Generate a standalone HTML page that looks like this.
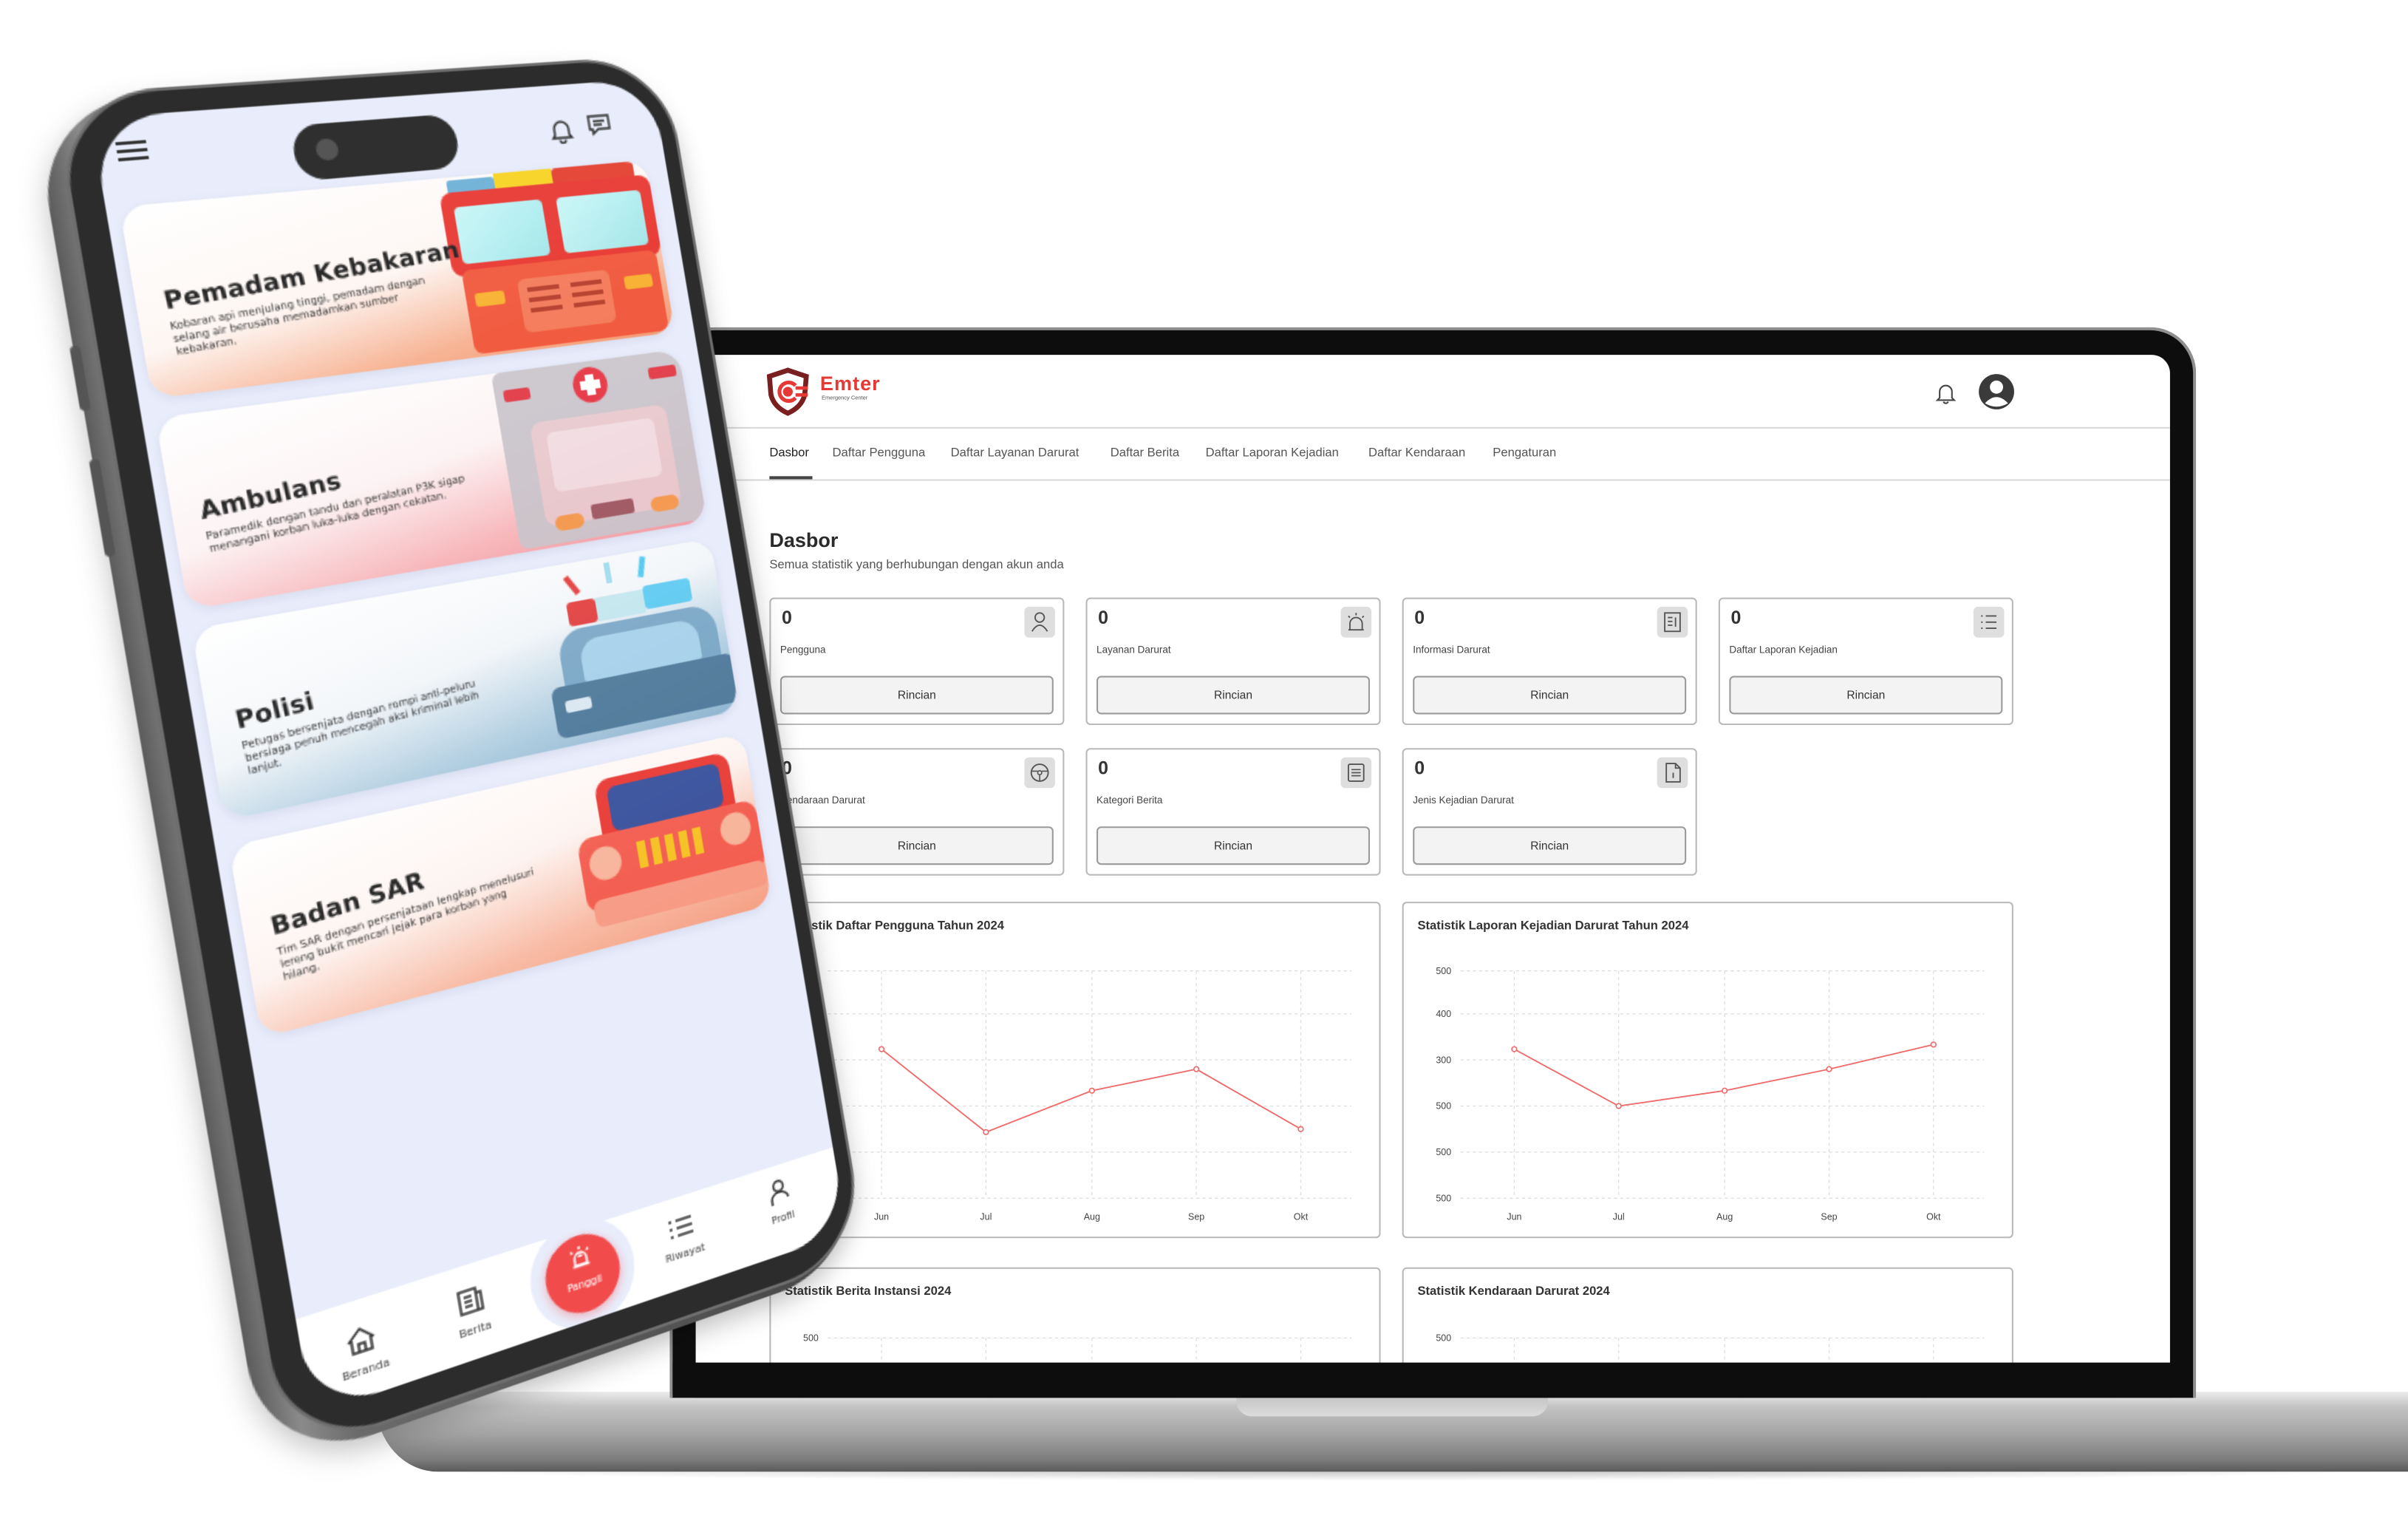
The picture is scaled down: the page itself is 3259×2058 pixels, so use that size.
<!DOCTYPE html>
<html><head><meta charset="utf-8">
<style>
html,body{margin:0;padding:0;width:3259px;height:2056px;overflow:hidden;background:#fff}
#s{position:absolute;left:0;top:0;width:1568px;height:990px;transform:scale(2.0785);transform-origin:0 0;font-family:"Liberation Sans",sans-serif;color:#333}
.a{position:absolute}
.card{position:absolute;width:190px;height:81px;border:1px solid #b9b9b9;border-radius:3px;background:#fff}
.card .n{position:absolute;left:7px;top:5px;font-size:12px;font-weight:bold;color:#333}
.card .ib{position:absolute;right:5px;top:5px;width:20px;height:20px;background:#dedede;border-radius:3px}
.card .lb{position:absolute;left:6px;top:30px;font-size:6.5px;color:#444}
.card .bt{position:absolute;left:6px;right:6px;top:50px;height:23px;background:#f3f3f3;border:1px solid #9a9a9a;border-radius:3px;font-size:7.5px;text-align:center;line-height:23px;color:#333}
.chart{position:absolute;width:396px;border:1px solid #b9b9b9;border-radius:3px;background:#fff}
.nav span{position:absolute;top:59px;font-size:8px;color:#555;white-space:nowrap}
.pc{position:absolute;left:8px;width:344px;height:120px;border-radius:16px;overflow:hidden;box-shadow:0 2px 6px rgba(80,90,140,.12)}
.pt{position:absolute;left:16px;transform:rotate(-4deg);transform-origin:0 0;font-family:"DejaVu Sans",sans-serif;color:#2a2a2a;width:200px}
.pt b{display:block;font-size:15.5px;font-weight:bold;white-space:nowrap;letter-spacing:.2px}
.pt i{display:block;font-style:normal;font-size:6.6px;line-height:8px;margin-top:3px;width:170px;color:#333}
.ni{position:absolute;font-family:"DejaVu Sans",sans-serif;font-size:7px;color:#444;text-align:center;width:50px}
</style></head><body>
<div id="s">

<!-- LAPTOP BASE -->
<div class="a" style="left:250px;top:950px;width:1318px;height:14px;background:radial-gradient(ellipse at center,rgba(0,0,0,.25),rgba(0,0,0,0) 70%)"></div>
<div class="a" style="left:245px;top:906px;width:1330px;height:52px;background:linear-gradient(#ececec 0%,#c4c4c4 18%,#a2a2a2 55%,#7c7c7c 85%,#5a5a5a 100%);border-radius:6px 0 0 40px / 6px 0 0 44px"></div>
<div class="a" style="left:805px;top:906px;width:203px;height:16px;background:linear-gradient(#bfbfbf,#dcdcdc);border-radius:0 0 10px 10px"></div>

<!-- LAPTOP LID -->
<div class="a" style="left:436px;top:213px;width:990px;height:695px;background:#0d0d0d;border:2px solid #8f8f8f;border-bottom:none;border-radius:30px 30px 0 0"></div>
<div class="a" style="left:453px;top:231px;width:960px;height:657px;background:#fff;border-radius:12px 12px 0 0;overflow:hidden">
  <svg class="a" style="left:45px;top:8px" width="30" height="32" viewBox="0 0 30 32">
    <path d="M15 2 L27 6 L26 18 Q24 26 15 30 Q6 26 4 18 L3 6 Z" fill="none" stroke="#7a1f1f" stroke-width="3.2"/>
    <path d="M20 12 A6 6 0 1 0 20 20" fill="none" stroke="#e53935" stroke-width="2.5"/>
    <circle cx="15" cy="16" r="3.2" fill="#e53935"/>
    <rect x="20" y="12.5" width="8" height="2.2" fill="#e53935"/><rect x="20" y="17" width="8" height="2.2" fill="#e53935"/>
  </svg>
  <div class="a" style="left:81px;top:11px;font-size:13px;font-weight:bold;color:#e53935;letter-spacing:.5px">Emter</div>
  <div class="a" style="left:82px;top:26px;font-size:3.6px;color:#555">Emergency Center</div>
  <svg class="a" style="left:807px;top:17px" width="14" height="16" viewBox="0 0 14 16"><path d="M3 11 V7 a4 4 0 0 1 8 0 V11 L12.5 12.5 H1.5 Z M5.5 13.5 a1.6 1.6 0 0 0 3 0" fill="none" stroke="#444" stroke-width="1"/></svg>
  <svg class="a" style="left:835px;top:12px" width="24" height="24" viewBox="0 0 24 24"><circle cx="12" cy="12" r="11.5" fill="#3a3a3a"/><circle cx="12" cy="9" r="4.3" fill="#fff"/><path d="M4.5 19.5 Q12 11.5 19.5 19.5 Q12 24 4.5 19.5Z" fill="#fff"/></svg>
  <div class="a" style="left:0;top:47px;width:960px;height:1px;background:#d8d8d8"></div>
  <div class="nav">
    <span style="left:48px;color:#222">Dasbor</span>
    <span style="left:89px">Daftar Pengguna</span>
    <span style="left:166px">Daftar Layanan Darurat</span>
    <span style="left:270px">Daftar Berita</span>
    <span style="left:332px">Daftar Laporan Kejadian</span>
    <span style="left:438px">Daftar Kendaraan</span>
    <span style="left:519px">Pengaturan</span>
  </div>
  <div class="a" style="left:48px;top:79px;width:28px;height:1.5px;background:#444"></div>
  <div class="a" style="left:0;top:81px;width:960px;height:1px;background:#d8d8d8"></div>
  <div class="a" style="left:48px;top:113px;font-size:13px;font-weight:bold;color:#2a2a2a">Dasbor</div>
  <div class="a" style="left:48px;top:132px;font-size:8px;color:#555">Semua statistik yang berhubungan dengan akun anda</div>

  <div class="card" style="left:48px;top:158px"><div class="n">0</div><div class="ib"><svg width="20" height="20" viewBox="0 0 20 20"><circle cx="10" cy="7" r="3" fill="none" stroke="#555" stroke-width=".9"/><path d="M5 16 Q10 8 15 16" fill="none" stroke="#555" stroke-width=".9"/></svg></div><div class="lb">Pengguna</div><div class="bt">Rincian</div></div>
  <div class="card" style="left:254px;top:158px"><div class="n">0</div><div class="ib"><svg width="20" height="20" viewBox="0 0 20 20"><path d="M6 15 V11 a4 4 0 0 1 8 0 V15 Z M5 15 H15 M10 4 V5.5 M5 6 l1 1 M15 6 l-1 1" fill="none" stroke="#555" stroke-width=".9"/></svg></div><div class="lb">Layanan Darurat</div><div class="bt">Rincian</div></div>
  <div class="card" style="left:460px;top:158px"><div class="n">0</div><div class="ib"><svg width="20" height="20" viewBox="0 0 20 20"><rect x="5" y="4" width="10" height="12" fill="none" stroke="#555" stroke-width=".9"/><path d="M7 7 H10 M7 9.5 H10 M7 12 H10 M12 7 V13" stroke="#555" stroke-width=".9"/></svg></div><div class="lb">Informasi Darurat</div><div class="bt">Rincian</div></div>
  <div class="card" style="left:666px;top:158px"><div class="n">0</div><div class="ib"><svg width="20" height="20" viewBox="0 0 20 20"><path d="M8 6 H15 M8 10 H15 M8 14 H15 M5 6 H6 M5 10 H6 M5 14 H6" stroke="#555" stroke-width=".9"/></svg></div><div class="lb">Daftar Laporan Kejadian</div><div class="bt">Rincian</div></div>
  <div class="card" style="left:48px;top:256px"><div class="n">0</div><div class="ib"><svg width="20" height="20" viewBox="0 0 20 20"><circle cx="10" cy="10" r="5.5" fill="none" stroke="#555" stroke-width=".9"/><circle cx="10" cy="10" r="1.3" fill="none" stroke="#555" stroke-width=".8"/><path d="M4.6 9 H8.7 M11.3 9 H15.4 M10 11.3 V15.5" stroke="#555" stroke-width=".8"/></svg></div><div class="lb">Kendaraan Darurat</div><div class="bt">Rincian</div></div>
  <div class="card" style="left:254px;top:256px"><div class="n">0</div><div class="ib"><svg width="20" height="20" viewBox="0 0 20 20"><rect x="5" y="4.5" width="10" height="11" rx="1" fill="none" stroke="#555" stroke-width=".9"/><path d="M7 8 H13 M7 10 H13 M7 12 H13" stroke="#555" stroke-width=".8"/></svg></div><div class="lb">Kategori Berita</div><div class="bt">Rincian</div></div>
  <div class="card" style="left:460px;top:256px"><div class="n">0</div><div class="ib"><svg width="20" height="20" viewBox="0 0 20 20"><path d="M6 4 H12 L15 7 V16 H6 Z M12 4 V7 H15 M10.5 10 V13.5" fill="none" stroke="#555" stroke-width=".9"/></svg></div><div class="lb">Jenis Kejadian Darurat</div><div class="bt">Rincian</div></div>

  <div class="chart" style="left:48px;top:356px;height:217px">
    <svg width="396" height="217" viewBox="0 0 396 217" style="font-family:'Liberation Sans',sans-serif">
      <text x="9" y="17" font-size="8" font-weight="bold" fill="#333">Statistik Daftar Pengguna Tahun 2024</text>
      <g stroke="#dcdcdc" stroke-width=".6" stroke-dasharray="2 2">
        <path d="M37 44 H378 M37 72 H378 M37 102 H378 M37 132 H378 M37 162 H378 M37 192 H378 M72 44 V192 M140 44 V192 M209 44 V192 M277 44 V192 M345 44 V192"/></g>
      <g font-size="6" fill="#444" text-anchor="end"><text x="31" y="46">500</text><text x="31" y="74">400</text><text x="31" y="104">300</text><text x="31" y="134">500</text><text x="31" y="164">500</text><text x="31" y="194">500</text></g>
      <g font-size="6" fill="#444" text-anchor="middle"><text x="72" y="206">Jun</text><text x="140" y="206">Jul</text><text x="209" y="206">Aug</text><text x="277" y="206">Sep</text><text x="345" y="206">Okt</text></g>
      <polyline points="72,95 140,149 209,122 277,108 345,147" fill="none" stroke="#f16a6a" stroke-width=".9"/>
      <g fill="#fff" stroke="#f16a6a" stroke-width=".8"><circle cx="72" cy="95" r="1.6"/><circle cx="140" cy="149" r="1.6"/><circle cx="209" cy="122" r="1.6"/><circle cx="277" cy="108" r="1.6"/><circle cx="345" cy="147" r="1.6"/></g>
    </svg>
  </div>
  <div class="chart" style="left:460px;top:356px;height:217px">
    <svg width="396" height="217" viewBox="0 0 396 217" style="font-family:'Liberation Sans',sans-serif">
      <text x="9" y="17" font-size="8" font-weight="bold" fill="#333">Statistik Laporan Kejadian Darurat Tahun 2024</text>
      <g stroke="#dcdcdc" stroke-width=".6" stroke-dasharray="2 2">
        <path d="M37 44 H378 M37 72 H378 M37 102 H378 M37 132 H378 M37 162 H378 M37 192 H378 M72 44 V192 M140 44 V192 M209 44 V192 M277 44 V192 M345 44 V192"/></g>
      <g font-size="6" fill="#444" text-anchor="end"><text x="31" y="46">500</text><text x="31" y="74">400</text><text x="31" y="104">300</text><text x="31" y="134">500</text><text x="31" y="164">500</text><text x="31" y="194">500</text></g>
      <g font-size="6" fill="#444" text-anchor="middle"><text x="72" y="206">Jun</text><text x="140" y="206">Jul</text><text x="209" y="206">Aug</text><text x="277" y="206">Sep</text><text x="345" y="206">Okt</text></g>
      <polyline points="72,95 140,132 209,122 277,108 345,92" fill="none" stroke="#f16a6a" stroke-width=".9"/>
      <g fill="#fff" stroke="#f16a6a" stroke-width=".8"><circle cx="72" cy="95" r="1.6"/><circle cx="140" cy="132" r="1.6"/><circle cx="209" cy="122" r="1.6"/><circle cx="277" cy="108" r="1.6"/><circle cx="345" cy="92" r="1.6"/></g>
    </svg>
  </div>
  <div class="chart" style="left:48px;top:594px;height:120px">
    <svg width="396" height="120" style="font-family:'Liberation Sans',sans-serif">
      <text x="9" y="17" font-size="8" font-weight="bold" fill="#333">Statistik Berita Instansi 2024</text>
      <g stroke="#dcdcdc" stroke-width=".6" stroke-dasharray="2 2"><path d="M37 45 H378 M72 45 V120 M140 45 V120 M209 45 V120 M277 45 V120 M345 45 V120"/></g>
      <text x="31" y="47" font-size="6" fill="#444" text-anchor="end">500</text>
    </svg>
  </div>
  <div class="chart" style="left:460px;top:594px;height:120px">
    <svg width="396" height="120" style="font-family:'Liberation Sans',sans-serif">
      <text x="9" y="17" font-size="8" font-weight="bold" fill="#333">Statistik Kendaraan Darurat 2024</text>
      <g stroke="#dcdcdc" stroke-width=".6" stroke-dasharray="2 2"><path d="M37 45 H378 M72 45 V120 M140 45 V120 M209 45 V120 M277 45 V120 M345 45 V120"/></g>
      <text x="31" y="47" font-size="6" fill="#444" text-anchor="end">500</text>
    </svg>
  </div>
</div>
<div class="a" style="left:438px;top:887px;width:987px;height:21px;background:#0d0d0d"></div>

<!-- PHONE -->
<div class="a" style="left:0;top:0;width:360px;height:780px;transform-origin:0 0;transform:matrix3d(1.1415,-0.05333,0,0.00033944,0.17895,1.045,0,0.0000036218,0,0,1,0,66,106,0,1)">
  <div class="a" style="left:-34px;top:-40px;width:408px;height:846px;border-radius:66px;background:linear-gradient(90deg,#5c5c5c,#8a8a8a 6%,#6a6a6a 14%,#444 100%);box-shadow:0 6px 18px rgba(0,0,0,.25)"></div>
  <div class="a" style="left:-36px;top:180px;width:6px;height:60px;background:#555;border-radius:3px"></div>
  <div class="a" style="left:-36px;top:110px;width:6px;height:40px;background:#555;border-radius:3px"></div>
  <div class="a" style="left:-22px;top:-44px;width:398px;height:846px;border-radius:62px;background:#2c2c2c;border:2px solid #6e6e6e;box-sizing:border-box"></div>
  <div class="a" style="left:-2px;top:-28px;width:366px;height:810px;border-radius:44px;background:#e9edfb;overflow:hidden">
    <div class="a" style="left:0;top:28px;width:366px;height:780px">
      <div class="a" style="left:12px;top:-12px;width:18px;height:2px;background:#333;box-shadow:0 5px 0 #333,0 10px 0 #333"></div>
      <div class="a" style="left:118px;top:-14px;width:106px;height:36px;border-radius:18px;background:#2f2f2f"></div>
      <div class="a" style="left:132px;top:-4px;width:14px;height:14px;border-radius:50%;background:#555"></div>
      <svg class="a" style="left:288px;top:-6px" width="16" height="18" viewBox="0 0 16 18"><path d="M3 12 V8 a5 5 0 0 1 10 0 V12 L14.5 14 H1.5 Z M6 15.5 a2 2 0 0 0 4 0" fill="none" stroke="#333" stroke-width="1.4"/></svg>
      <svg class="a" style="left:314px;top:-8px" width="18" height="18" viewBox="0 0 18 18"><path d="M2 3 H16 V12 H8 L4 15 V12 H2 Z M5 6.5 H13 M5 9 H11" fill="none" stroke="#333" stroke-width="1.4"/></svg>

      <div class="pc" style="top:28px;background:linear-gradient(168deg,#fff 0%,#fdf6f3 48%,#f7b596 78%,#f39a74 100%)">
        <div class="a" style="left:196px;top:-2px;width:150px;height:124px;opacity:.92">
          <div class="a" style="left:40px;top:0;width:40px;height:14px;background:#f7d21c;border-radius:3px"></div>
          <div class="a" style="left:8px;top:4px;width:32px;height:10px;background:#6aaed6;border-radius:2px"></div>
          <div class="a" style="left:80px;top:2px;width:58px;height:12px;background:#e33a2a;border-radius:3px"></div>
          <div class="a" style="left:2px;top:12px;width:146px;height:56px;background:#e8322d;border-radius:8px"></div>
          <div class="a" style="left:10px;top:22px;width:60px;height:38px;background:linear-gradient(135deg,#c9f6f7,#9ee8ec);border-radius:4px"></div>
          <div class="a" style="left:80px;top:22px;width:60px;height:38px;background:linear-gradient(135deg,#c9f6f7,#9ee8ec);border-radius:4px"></div>
          <div class="a" style="left:8px;top:64px;width:136px;height:56px;background:#f0553a;border-radius:6px"></div>
          <div class="a" style="left:14px;top:80px;width:20px;height:9px;background:#f8b22d;border-radius:2px"></div>
          <div class="a" style="left:118px;top:80px;width:20px;height:9px;background:#f8b22d;border-radius:2px"></div>
          <div class="a" style="left:44px;top:74px;width:64px;height:36px;background:#f37a5b;border-radius:5px"></div>
          <div class="a" style="left:50px;top:80px;width:22px;height:3px;background:#b23a2a;box-shadow:0 7px 0 #b23a2a,0 14px 0 #b23a2a,30px 0 0 #b23a2a,30px 7px 0 #b23a2a,30px 14px 0 #b23a2a"></div>
        </div>
        <div class="pt" style="top:52px"><b>Pemadam Kebakaran</b><i>Kobaran api menjulang tinggi, pemadam dengan selang air berusaha memadamkan sumber kebakaran.</i></div>
      </div>

      <div class="pc" style="top:160px;background:linear-gradient(168deg,#fff 0%,#fcf3f4 45%,#f7b7bb 78%,#f39aa2 100%)">
        <div class="a" style="left:212px;top:0;width:134px;height:120px;opacity:.92">
          <div class="a" style="left:0;top:0;width:132px;height:118px;background:#c9c5cb;border-radius:6px"></div>
          <div class="a" style="left:6px;top:12px;width:18px;height:8px;background:#e0333f;border-radius:2px"></div>
          <div class="a" style="left:108px;top:10px;width:20px;height:8px;background:#e0333f;border-radius:2px"></div>
          <div class="a" style="left:54px;top:4px;width:24px;height:24px;border-radius:50%;background:#e52f3d"></div>
          <div class="a" style="left:63px;top:9px;width:6px;height:14px;background:#fff"></div>
          <div class="a" style="left:59px;top:13px;width:14px;height:6px;background:#fff"></div>
          <div class="a" style="left:20px;top:36px;width:96px;height:70px;background:#e8c9cf;border-radius:8px"></div>
          <div class="a" style="left:30px;top:44px;width:76px;height:40px;background:#f1dde2;border-radius:5px"></div>
          <div class="a" style="left:52px;top:96px;width:30px;height:10px;background:#9b5560;border-radius:2px"></div>
          <div class="a" style="left:26px;top:100px;width:20px;height:10px;background:#f39a4a;border-radius:6px"></div>
          <div class="a" style="left:94px;top:98px;width:20px;height:10px;background:#f39a4a;border-radius:6px"></div>
        </div>
        <div class="pt" style="top:52px"><b>Ambulans</b><i>Paramedik dengan tandu dan peralatan P3K sigap menangani korban luka-luka dengan cekatan.</i></div>
      </div>

      <div class="pc" style="top:292px;background:linear-gradient(168deg,#fff 0%,#f3f6f9 45%,#b4d0e2 75%,#8fb5cf 100%)">
        <div class="a" style="left:210px;top:0;width:136px;height:120px;opacity:.92">
          <div class="a" style="left:30px;top:8px;width:4px;height:14px;background:#e23b3b;transform:rotate(-30deg)"></div>
          <div class="a" style="left:56px;top:4px;width:4px;height:14px;background:#9fdcec"></div>
          <div class="a" style="left:80px;top:4px;width:4px;height:14px;background:#4ec8ef;transform:rotate(15deg)"></div>
          <div class="a" style="left:26px;top:26px;width:20px;height:16px;background:#e23b3b;border-radius:3px"></div>
          <div class="a" style="left:46px;top:26px;width:34px;height:16px;background:#c4e6ee"></div>
          <div class="a" style="left:80px;top:24px;width:34px;height:16px;background:#5ccaf1;border-radius:3px"></div>
          <div class="a" style="left:16px;top:44px;width:112px;height:44px;background:#7aa6c6;border-radius:18px 18px 4px 4px"></div>
          <div class="a" style="left:30px;top:52px;width:84px;height:28px;background:#a9d2ec;border-radius:14px 14px 2px 2px"></div>
          <div class="a" style="left:6px;top:80px;width:130px;height:34px;background:#4f7898;border-radius:6px"></div>
          <div class="a" style="left:14px;top:90px;width:18px;height:8px;background:#dfeaf2;border-radius:2px"></div>
        </div>
        <div class="pt" style="top:52px"><b>Polisi</b><i>Petugas bersenjata dengan rompi anti-peluru bersiaga penuh mencegah aksi kriminal lebih lanjut.</i></div>
      </div>

      <div class="pc" style="top:428px;background:linear-gradient(168deg,#fff 0%,#fdf4f1 45%,#f8bca6 76%,#f59e82 100%)">
        <div class="a" style="left:212px;top:6px;width:134px;height:114px;opacity:.92">
          <div class="a" style="left:22px;top:4px;width:96px;height:40px;background:#e8322d;border-radius:10px 10px 0 0"></div>
          <div class="a" style="left:30px;top:10px;width:80px;height:30px;background:#2f4a9a;border-radius:6px"></div>
          <div class="a" style="left:4px;top:40px;width:128px;height:50px;background:#f2574a;border-radius:10px"></div>
          <div class="a" style="left:10px;top:48px;width:22px;height:22px;border-radius:50%;background:#f7b49a"></div>
          <div class="a" style="left:104px;top:46px;width:22px;height:22px;border-radius:50%;background:#f7b49a"></div>
          <div class="a" style="left:44px;top:50px;width:6px;height:18px;background:#f5c21b;box-shadow:10px 0 0 #f5c21b,20px 0 0 #f5c21b,30px 0 0 #f5c21b,40px 0 0 #f5c21b"></div>
          <div class="a" style="left:8px;top:82px;width:124px;height:18px;background:#f79a84;border-radius:6px"></div>
        </div>
        <div class="pt" style="top:46px"><b>Badan SAR</b><i>Tim SAR dengan persenjataan lengkap menelusuri lereng bukit mencari jejak para korban yang hilang.</i></div>
      </div>

      <div class="a" style="left:0;top:722px;width:366px;height:70px;background:#fff"></div>
      <div class="a" style="left:145px;top:716px;width:70px;height:70px;border-radius:50%;background:#e9edfb"></div>
      <div class="a" style="left:155px;top:726px;width:50px;height:50px;border-radius:50%;background:#f14b4b;box-shadow:0 2px 6px rgba(240,75,75,.4)"></div>
      <svg class="a" style="left:170px;top:730px" width="20" height="20" viewBox="0 0 20 20"><path d="M6 15 V11 a4 4 0 0 1 8 0 V15 Z M4.5 15.5 H15.5 M10 3 V5 M4 5.5 l1.3 1.3 M16 5.5 l-1.3 1.3 M9 10 a1 1 0 0 1 2 0" fill="none" stroke="#fff" stroke-width="1.4"/></svg>
      <div class="ni" style="left:155px;top:754px;color:#fff;font-size:6.5px">Panggil</div>
      <svg class="a" style="left:26px;top:738px" width="20" height="18" viewBox="0 0 20 18"><path d="M2 9 L10 2 L18 9 M4 8 V16 H16 V8 M8 16 V11 H12 V16" fill="none" stroke="#333" stroke-width="1.5"/></svg>
      <div class="ni" style="left:11px;top:762px">Beranda</div>
      <svg class="a" style="left:96px;top:736px" width="20" height="18" viewBox="0 0 20 18"><path d="M3 2 H14 V16 H3 Z M14 5 H17 V16 H14 M6 6 H11 M6 9 H11 M6 12 H11" fill="none" stroke="#333" stroke-width="1.5"/></svg>
      <div class="ni" style="left:81px;top:760px">Berita</div>
      <svg class="a" style="left:240px;top:734px" width="20" height="16" viewBox="0 0 20 16"><path d="M7 3 H18 M7 8 H18 M7 13 H18 M2 3 H4 M2 8 H4 M2 13 H4" stroke="#333" stroke-width="1.5"/></svg>
      <div class="ni" style="left:225px;top:756px">Riwayat</div>
      <svg class="a" style="left:313px;top:730px" width="18" height="20" viewBox="0 0 18 20"><circle cx="9" cy="6" r="3.5" fill="none" stroke="#333" stroke-width="1.5"/><path d="M3 18 V15 a6 5 0 0 1 12 0" fill="none" stroke="#333" stroke-width="1.5"/></svg>
      <div class="ni" style="left:297px;top:754px">Profil</div>
    </div>
  </div>
</div>

</div>
</body></html>
